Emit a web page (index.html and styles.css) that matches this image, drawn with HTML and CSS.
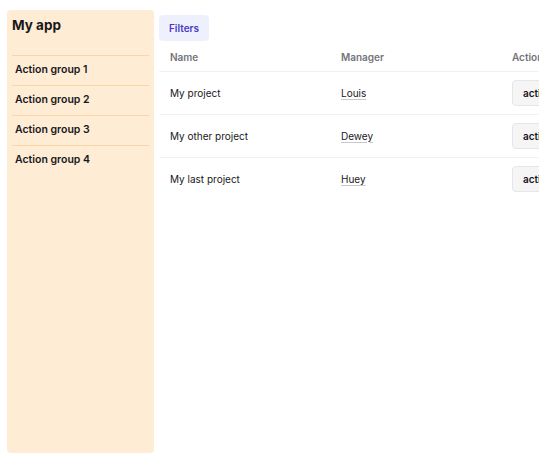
FILE: index.html
```html
<!DOCTYPE html>
<html lang="en">
<head>
<meta charset="utf-8">
<title>My app</title>
<link rel="stylesheet" href="styles.css">
</head>
<body>
<div class="app">
  <aside class="sidebar">
    <h1 class="title">My app</h1>
    <nav class="groups">
      <div class="group">Action group 1</div>
      <div class="group">Action group 2</div>
      <div class="group">Action group 3</div>
      <div class="group">Action group 4</div>
    </nav>
  </aside>
  <main class="content">
    <button class="filters">Filters</button>
    <table class="projects">
      <colgroup>
        <col class="col-name">
        <col class="col-manager">
        <col class="col-actions">
      </colgroup>
      <thead>
        <tr><th>Name</th><th>Manager</th><th>Actions</th></tr>
      </thead>
      <tbody>
        <tr><td>My project</td><td><span class="manager">Louis</span></td><td><button class="action">actions</button></td></tr>
        <tr><td>My other project</td><td><span class="manager">Dewey</span></td><td><button class="action">actions</button></td></tr>
        <tr><td>My last project</td><td><span class="manager">Huey</span></td><td><button class="action">actions</button></td></tr>
      </tbody>
    </table>
  </main>
</div>
</body>
</html>
```

FILE: styles.css
```css
* { box-sizing: border-box; }
html, body { margin: 0; padding: 0; background: #ffffff; }
body {
  font-family: Inter, "Noto Sans", "Liberation Sans", sans-serif;
  color: #18181b;
  overflow: hidden;
}
.app {
  display: flex;
  gap: 5px;
  width: 539px;
  height: 460px;
  padding: 10px 0 7px 7px;
  overflow: hidden;
}
.sidebar {
  flex: 0 0 147px;
  background: #feecd5;
  border-radius: 4px;
  padding: 5px 5px;
}
.title {
  margin: 0 0 19px;
  font-size: 13.5px;
  line-height: 21px;
  font-weight: 700;
}
.group {
  border-top: 1px solid #fbd5a8;
  height: 30px;
  line-height: 28px;
  padding: 0 3px;
  font-size: 10.5px;
  font-weight: 600;
}
.content {
  flex: 1 1 auto;
  min-width: 0;
  padding-top: 5px;
  overflow: hidden;
}
.filters {
  display: block;
  height: 26px;
  width: 50px;
  padding: 0;
  border: none;
  border-radius: 4px;
  background: #eef0fd;
  color: #4a3ac6;
  font-family: inherit;
  font-size: 10px;
  font-weight: 600;
}
.projects {
  margin-top: 2px;
  border-collapse: collapse;
  table-layout: fixed;
  width: 620px;
}
.col-name, .col-manager { width: 171px; }
.col-actions { width: 278px; }
.projects th {
  height: 28px;
  padding: 0 11px;
  text-align: left;
  font-size: 10px;
  font-weight: 600;
  color: #74747c;
  border-bottom: 1px solid #f2f2f3;
}
.projects td {
  height: 43px;
  padding: 0 11px;
  font-size: 10px;
  border-bottom: 1px solid #f2f2f3;
}
.projects tbody tr:last-child td { border-bottom: none; }
.manager {
  text-decoration: underline;
  text-decoration-color: #c8c8cc;
  text-underline-offset: 2px;
}
.action {
  display: block;
  height: 26px;
  padding: 0 10px;
  border: 1px solid #e6e6e8;
  border-radius: 4px;
  background: #f5f5f6;
  color: #18181b;
  font-family: inherit;
  font-size: 10px;
  font-weight: 600;
}
```
